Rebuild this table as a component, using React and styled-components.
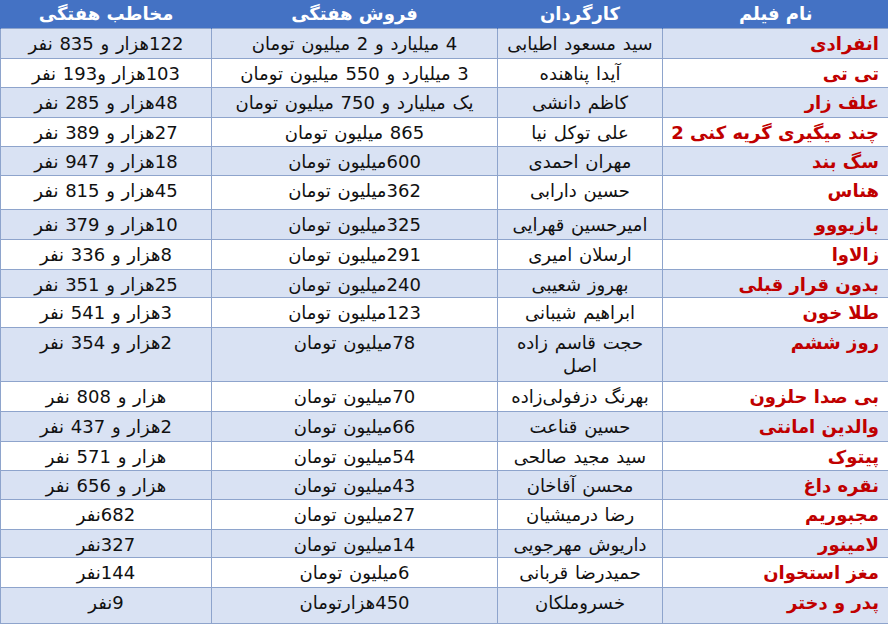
import React from 'react';
import styled, { createGlobalStyle } from 'styled-components';

const Global = createGlobalStyle`
  html, body { margin: 0; padding: 0; background: #ffffff; }
  body { font-family: "DejaVu Sans", "Liberation Sans", sans-serif; }
`;

const Table = styled.table`
  width: 888px;
  table-layout: fixed;
  border-collapse: collapse;
  direction: rtl;
  font-family: "DejaVu Sans", "Liberation Sans", sans-serif;
  font-size: 18px;
  color: #111;
`;

const HeadRow = styled.tr`
  height: 28px;
  background: #4472c4;
`;

const HeadCell = styled.th`
  padding: 0;
  color: #ffffff;
  font-weight: bold;
  font-size: 18px;
  text-align: center;
  vertical-align: middle;
  border-left: 1px solid #4472c4;
`;

const Row = styled.tr`
  background: ${(p) => (p.$shade ? '#d9e2f3' : '#ffffff')};
`;

const Cell = styled.td`
  border: 1px solid #8ea4cc;
  padding: 3px 4px 0;
  vertical-align: top;
  text-align: center;
  line-height: 23px;
  white-space: nowrap;
  word-spacing: 1px;
`;

const NameCell = styled(Cell)`
  text-align: right;
  padding-right: 9px;
  color: #c00000;
  font-weight: bold;
  word-spacing: 0;
`;

const rows = [
  { name: 'انفرادی', dir: 'سید مسعود اطیابی', sales: '4  میلیارد و 2 میلیون تومان', aud: '122هزار و 835 نفر', h: 30 },
  { name: 'تی تی', dir: 'آیدا پناهنده', sales: '3  میلیارد و 550 میلیون تومان', aud: '103هزار و193 نفر', h: 29 },
  { name: 'علف زار', dir: 'کاظم دانشی', sales: 'یک میلیارد و 750 میلیون تومان', aud: '48هزار و 285 نفر', h: 30 },
  { name: 'چند میگیری گریه کنی 2', dir: 'علی توکل نیا', sales: '865  میلیون تومان', aud: '27هزار و 389 نفر', h: 29 },
  { name: 'سگ بند', dir: 'مهران احمدی', sales: '600میلیون تومان', aud: '18هزار و 947 نفر', h: 29 },
  { name: 'هناس', dir: 'حسین دارابی', sales: '362میلیون تومان', aud: '45هزار و 815 نفر', h: 34 },
  { name: 'بازیووو', dir: 'امیرحسین قهرایی', sales: '325میلیون تومان', aud: '10هزار و 379 نفر', h: 30 },
  { name: 'زالاوا', dir: 'ارسلان امیری', sales: '291میلیون تومان', aud: '8هزار و 336 نفر', h: 30 },
  { name: 'بدون قرار قبلی', dir: 'بهروز شعیبی', sales: '240میلیون تومان', aud: '25هزار و 351 نفر', h: 28 },
  { name: 'طلا خون', dir: 'ابراهیم شیبانی', sales: '123میلیون تومان', aud: '3هزار و 541 نفر', h: 30 },
  { name: 'روز ششم', dir: ['حجت قاسم زاده', 'اصل'], sales: '78میلیون تومان', aud: '2هزار و 354 نفر', h: 54 },
  { name: 'بی صدا حلزون', dir: 'بهرنگ دزفولی‌زاده', sales: '70میلیون تومان', aud: 'هزار و 808 نفر', h: 30 },
  { name: 'والدین امانتی', dir: 'حسین قناعت', sales: '66میلیون تومان', aud: '2هزار و 437 نفر', h: 30 },
  { name: 'پیتوک', dir: 'سید مجید صالحی', sales: '54میلیون تومان', aud: 'هزار و 571 نفر', h: 29 },
  { name: 'نقره داغ', dir: 'محسن آقاخان', sales: '43میلیون تومان', aud: 'هزار و 656 نفر', h: 29 },
  { name: 'مجبوریم', dir: 'رضا درمیشیان', sales: '27میلیون تومان', aud: '682نفر', h: 30 },
  { name: 'لامینور', dir: 'داریوش مهرجویی', sales: '14میلیون تومان', aud: '327نفر', h: 28 },
  { name: 'مغز استخوان', dir: 'حمیدرضا قربانی', sales: '6میلیون تومان', aud: '144نفر', h: 30 },
  { name: 'پدر و دختر', dir: 'خسروملکان', sales: '450هزارتومان', aud: '9نفر', h: 36 },
];

export default function App() {
  return (
    <>
      <Global />
      <Table>
        <colgroup>
          <col style={{ width: 226 }} />
          <col style={{ width: 165 }} />
          <col style={{ width: 286 }} />
          <col style={{ width: 211 }} />
        </colgroup>
        <thead>
          <HeadRow>
            <HeadCell>نام فیلم</HeadCell>
            <HeadCell>کارگردان</HeadCell>
            <HeadCell>فروش هفتگی</HeadCell>
            <HeadCell>مخاطب هفتگی</HeadCell>
          </HeadRow>
        </thead>
        <tbody>
          {rows.map((r, i) => (
            <Row key={r.name} $shade={i % 2 === 0} style={{ height: r.h }}>
              <NameCell>{r.name}</NameCell>
              <Cell>
                {Array.isArray(r.dir) ? (
                  <>
                    {r.dir[0]}
                    <br />
                    {r.dir[1]}
                  </>
                ) : (
                  r.dir
                )}
              </Cell>
              <Cell>{r.sales}</Cell>
              <Cell>{r.aud}</Cell>
            </Row>
          ))}
        </tbody>
      </Table>
    </>
  );
}
